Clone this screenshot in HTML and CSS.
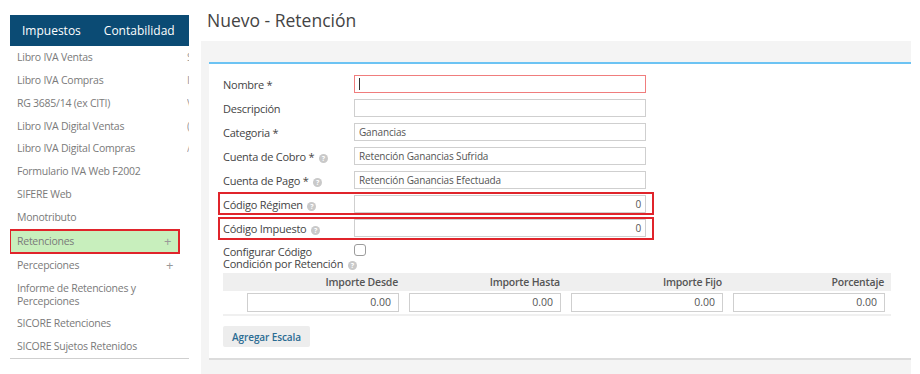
FILE: index.html
```html
<!DOCTYPE html>
<html lang="es">
<head>
<meta charset="utf-8">
<title>Nuevo - Retención</title>
<link rel="stylesheet" href="styles.css">
</head>
<body>
<div class="page">
  <aside class="sidebar">
    <div class="tabs">
      <span class="tab">Impuestos</span>
      <span class="tab">Contabilidad</span>
    </div>
    <ul class="menu">
      <li class="item"><span>Libro IVA Ventas</span><span class="clip">S</span></li>
      <li class="item"><span>Libro IVA Compras</span><span class="clip">I</span></li>
      <li class="item"><span>RG 3685/14 (ex CITI)</span><span class="clip">V</span></li>
      <li class="item"><span>Libro IVA Digital Ventas</span><span class="clip">(</span></li>
      <li class="item"><span>Libro IVA Digital Compras</span><span class="clip">/</span></li>
      <li class="item"><span>Formulario IVA Web F2002</span></li>
      <li class="item"><span>SIFERE Web</span></li>
      <li class="item"><span>Monotributo</span></li>
      <li class="item active"><span>Retenciones</span><span class="plus">+</span></li>
      <li class="item"><span>Percepciones</span><span class="plus">+</span></li>
      <li class="item"><span>Informe de Retenciones y<br>Percepciones</span></li>
      <li class="item"><span>SICORE Retenciones</span></li>
      <li class="item"><span>SICORE Sujetos Retenidos</span></li>
    </ul>
  </aside>
  <main class="main">
    <h1 class="title">Nuevo - Retención</h1>
    <div class="panel">
      <div class="card">
        <div class="form">
          <div class="row"><label class="lbl">Nombre *</label><div class="input error"><span class="caret"></span></div></div>
          <div class="row"><label class="lbl">Descripción</label><div class="input"></div></div>
          <div class="row"><label class="lbl">Categoria *</label><div class="input">Ganancias</div></div>
          <div class="row"><label class="lbl">Cuenta de Cobro * <span class="help">?</span></label><div class="input">Retención Ganancias Sufrida</div></div>
          <div class="row"><label class="lbl">Cuenta de Pago * <span class="help">?</span></label><div class="input">Retención Ganancias Efectuada</div></div>
          <div class="row hl"><label class="lbl">Código Régimen <span class="help">?</span></label><div class="input num">0</div></div>
          <div class="row hl"><label class="lbl">Código Impuesto <span class="help">?</span></label><div class="input num">0</div></div>
          <div class="row tall"><label class="lbl two">Configurar Código<br>Condición por Retención <span class="help">?</span></label><div class="check"></div></div>
        </div>
        <div class="table">
          <div class="thead">
            <div class="th"></div>
            <div class="th">Importe Desde</div>
            <div class="th">Importe Hasta</div>
            <div class="th">Importe Fijo</div>
            <div class="th">Porcentaje</div>
          </div>
          <div class="trow">
            <div class="td"></div>
            <div class="td"><div class="cell">0.00</div></div>
            <div class="td"><div class="cell">0.00</div></div>
            <div class="td"><div class="cell">0.00</div></div>
            <div class="td"><div class="cell">0.00</div></div>
          </div>
        </div>
        <button class="btn" type="button">Agregar Escala</button>
      </div>
    </div>
  </main>
</div>
</body>
</html>
```
FILE: styles.css
```css
* { box-sizing: border-box; }
html, body { margin: 0; padding: 0; background: #fff; }
body {
  font-family: "Open Sans", "Noto Sans", sans-serif;
  color: #444;
  width: 920px;
  height: 374px;
  overflow: hidden;
}
.page {
  display: flex;
  align-items: flex-start;
  height: 374px;
}
.sidebar {
  width: 179px;
  margin-left: 10px;
  padding-top: 15px;
  flex: none;
}
.tabs {
  background: #0b4b74;
  height: 31px;
  display: flex;
  align-items: center;
  gap: 23px;
  padding-left: 12px;
}
.tab {
  color: #fff;
  font-size: 12px;
  font-weight: 400;
}
.menu {
  list-style: none;
  margin: 0;
  padding: 0;
  border-bottom: 1px solid #cfcfcf;
  overflow: hidden;
}
.item {
  display: flex;
  justify-content: space-between;
  align-items: center;
  padding: 5px 0 5px 7px;
  font-size: 10.5px;
  letter-spacing: -0.25px;
  line-height: 12.86px;
  color: #7a7a7a;
  white-space: nowrap;
}
.clip {
  width: 2px;
  overflow: hidden;
  color: #999;
}
.plus {
  color: #999;
  font-size: 13px;
  width: 14px;
  margin-right: 9px;
}
.item.active {
  background: #c8efbd;
  border: 2px solid #e0242b;
  margin: 0 9px 0 -1px;
  padding: 3px 0 3px 6px;
  height: 25px;
}
.item.active .plus { margin-right: 0; }
.main {
  flex: 1;
  margin-left: 12px;
}
.title {
  margin: 0;
  height: 41px;
  padding: 9px 0 0 6px;
  font-size: 17.5px;
  font-weight: 400;
  line-height: 22px;
  color: #444;
}
.panel {
  background: #f4f4f4;
  width: 710px;
  height: 333px;
  padding: 21px 0 0 8px;
}
.card {
  background: #fff;
  border-top: 2px solid #6cc3f3;
  border-bottom: 2px solid #dcdcdc;
  height: 298px;
  padding: 11px 0 0 14px;
}
.form {
  display: flex;
  flex-direction: column;
  gap: 6px;
}
.row {
  display: grid;
  grid-template-columns: 131px 292px;
  align-items: center;
  height: 18px;
  position: relative;
  width: 423px;
}
.row.hl::after {
  content: "";
  position: absolute;
  left: -5px;
  right: -8px;
  top: -3px;
  bottom: -2px;
  border: 2px solid #e0242b;
}
.row.hl + .row.hl::after { top: -2px; bottom: -3px; }
.lbl {
  font-size: 11px;
  letter-spacing: -0.25px;
  color: #444;
  white-space: nowrap;
}
.help {
  display: inline-block;
  width: 9px;
  height: 9px;
  border-radius: 50%;
  background: #c9c9c9;
  color: #fff;
  font-size: 7px;
  letter-spacing: 0;
  line-height: 9px;
  text-align: center;
  font-weight: 700;
  vertical-align: 0;
  margin-left: 2px;
}
.input {
  height: 18px;
  border: 1px solid #cfcfcf;
  font-size: 10px;
  letter-spacing: -0.15px;
  line-height: 16px;
  padding: 0 4px;
  color: #555;
  white-space: nowrap;
}
.input.error { border-color: #f07d7d; }
.caret {
  display: inline-block;
  width: 1px;
  height: 12px;
  background: #333;
  vertical-align: -2px;
}
.input.num { text-align: right; }
.row.tall {
  height: 24px;
  align-items: start;
  margin-top: 1px;
}
.lbl.two {
  line-height: 12px;
  padding-top: 2px;
}
.check {
  width: 12px;
  height: 12px;
  border: 1px solid #9c9c9c;
  border-radius: 3px;
}
.table {
  width: 668px;
  margin-top: 5px;
  font-size: 10.5px;
}
.thead, .trow {
  display: grid;
  grid-template-columns: 20px repeat(4, 162px);
}
.thead {
  background: #efefef;
  height: 18px;
  align-items: center;
}
.th {
  text-align: right;
  font-weight: 600;
  letter-spacing: -0.2px;
  color: #555;
  padding-right: 7px;
}
.trow {
  height: 25px;
  border-bottom: 2px solid #f0f0f0;
  align-items: center;
}
.td { padding: 0 6px 0 4px; }
.cell {
  height: 19px;
  border: 1px solid #cfcfcf;
  text-align: right;
  line-height: 17px;
  padding-right: 7px;
  color: #555;
}
.btn {
  margin-top: 10px;
  width: 87px;
  height: 21px;
  border: none;
  border-radius: 2px;
  background: #ededed;
  color: #2b6c93;
  font-family: "Open Sans", "Noto Sans", sans-serif;
  font-weight: 600;
  font-size: 10px;
  letter-spacing: -0.1px;
  padding: 0;
}
```
